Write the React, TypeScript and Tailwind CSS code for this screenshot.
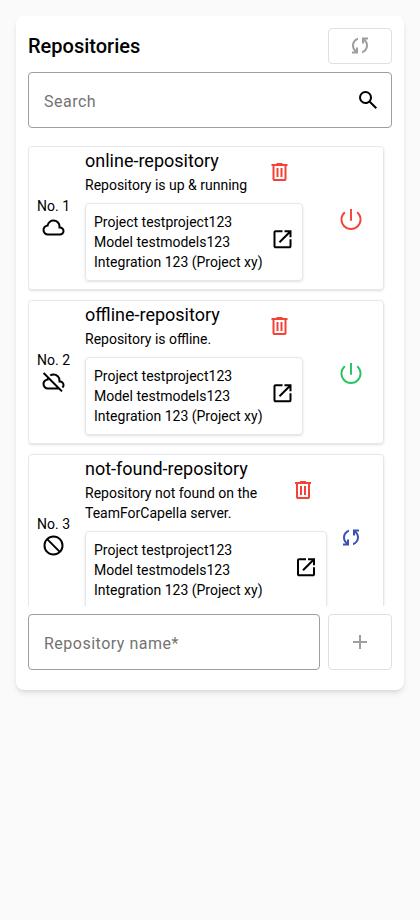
import React from "react";

const paths = {
  sync: "M160-160v-80h110l-16-14q-52-46-73-105t-21-119q0-111 66.5-197.5T400-790v84q-72 26-116 88.5T240-478q0 45 17 87.5t53 78.5l10 10v-98h80v240H160Zm400-10v-84q72-26 116-88.5T720-482q0-45-17-87.5T650-648l-10-10v98h-80v-240h240v80H690l16 14q49 49 71.5 106.5T800-482q0 111-66.5 197.5T560-170Z",
  search: "M784-120 532-372q-30 24-69 38t-83 14q-109 0-184.5-75.5T120-580q0-109 75.5-184.5T380-840q109 0 184.5 75.5T640-580q0 44-14 83t-38 69l252 252-56 56ZM380-400q75 0 127.5-52.5T560-580q0-75-52.5-127.5T380-760q-75 0-127.5 52.5T200-580q0 75 52.5 127.5T380-400Z",
  cloud: "M260-160q-91 0-155.5-63T40-377q0-78 47-139t123-78q25-92 100-149t170-57q117 0 198.5 81.5T760-520q69 8 114.5 59.5T920-340q0 75-52.5 127.5T740-160H260Zm0-80h480q42 0 71-29t29-71q0-42-29-71t-71-29h-60v-80q0-83-58.5-141.5T480-720q-83 0-141.5 58.5T280-520h-20q-58 0-99 41t-41 99q0 58 41 99t99 41Z",
  cloudOff: "M792-56 686-160H260q-92 0-156-64T40-380q0-77 47.5-137T210-594q3-8 6-15.5t6-16.5L56-792l56-56 736 736-56 56ZM260-240h346L284-562q-2 11-3 21t-1 21h-20q-58 0-99 41t-41 99q0 58 41 99t99 41Zm604 30-58-56q17-14 25.5-32.5T840-340q0-42-29-71t-71-29h-60v-80q0-83-58.5-141.5T480-720q-27 0-52 6.5T380-693l-58-58q35-24 74.5-36.5T480-800q117 0 198.5 81.5T760-520q69 8 114.5 59.5T920-340q0 39-15 72.5T864-210Z",
  block: "M480-80q-83 0-156-31.5T197-197q-54-54-85.5-127T80-480q0-83 31.5-156T197-763q54-54 127-85.5T480-880q83 0 156 31.5T763-763q54 54 85.5 127T880-480q0 83-31.5 156T763-197q-54 54-127 85.5T480-80Zm0-80q54 0 104-17.5t92-50.5L228-676q-33 42-50.5 92T160-480q0 134 93 227t227 93Zm252-124q33-42 50.5-92T800-480q0-134-93-227t-227-93q-54 0-104 17.5T284-732l448 448Z",
  trash: "M280-120q-33 0-56.5-23.5T200-200v-520h-40v-80h200v-40h240v40h200v80h-40v520q0 33-23.5 56.5T680-120H280Zm400-600H280v520h400v-520ZM360-280h80v-360h-80v360Zm160 0h80v-360h-80v360Z",
  open: "M200-120q-33 0-56.5-23.5T120-200v-560q0-33 23.5-56.5T200-840h280v80H200v560h560v-280h80v280q0 33-23.5 56.5T760-120H200Zm188-212-56-56 372-372H560v-80h280v280h-80v-144L388-332Z",
  power: "M447-438v-402h66v402h-66Zm33 318q-74 0-139.5-28.5T226-226q-49-49-77.500-114.500T120-480q0-80 33-151t93-123l47 47q-51 44-79 103t-28 124q0 122 86 208t208 86q122 0 208-86t86-208q0-65-27.500-124.500T667-707l47-47q60 52 93 123t33 151q0 74-28.500 139.500T734-226q-49 49-114.500 77.500T480-120Z",
  add: "M440-440H200v-80h240v-240h80v240h240v80H520v240h-80v-240Z",
};

type IconName = keyof typeof paths;

// dx and dy nudge the glyph inside its box, in viewBox units (40 units = 1px at size-6).
function Icon({ name, className = "size-6", dx = 0, dy = 0 }: { name: IconName; className?: string; dx?: number; dy?: number }) {
  return (
    <svg viewBox={`${-dx} ${-960 - dy} 960 960`} fill="currentColor" className={`block shrink-0 ${className}`}>
      <path d={paths[name]} />
    </svg>
  );
}

type Repository = {
  name: string;
  status: string;
  statusIcon: IconName;
  action: IconName;
  actionClass: string;
};

const repositories: Repository[] = [
  { name: "online-repository", status: "Repository is up & running", statusIcon: "cloud", action: "power", actionClass: "size-7 text-[#f44336]" },
  { name: "offline-repository", status: "Repository is offline.", statusIcon: "cloudOff", action: "power", actionClass: "size-7 text-[#22c55e]" },
  { name: "not-found-repository", status: "Repository not found on the TeamForCapella server.", statusIcon: "block", action: "sync", actionClass: "size-6 text-[#3f51b5]" },
];

function RepositoryCard({ repository, index }: { repository: Repository; index: number }) {
  const missing = repository.action === "sync";
  const dx = missing ? 0 : 20;
  return (
    <div className="flex w-[356px] shrink-0 items-center rounded border border-gray-200 shadow-sm">
      <div className="flex w-12 shrink-0 flex-col items-center pl-px">
        <span>No. {index + 1}</span>
        <Icon name={repository.statusIcon} className="-mt-px mb-px size-6" dx={-20} dy={20} />
      </div>
      <div className={`ml-2 flex flex-col pb-2 ${missing ? "w-[242px]" : "w-[218px]"}`}>
        <div className="flex items-center justify-between">
          <div className={missing ? "w-[185px]" : ""}>
            <div className="text-lg leading-7">{repository.name}</div>
            <div className={missing ? "" : "whitespace-nowrap"}>{repository.status}</div>
          </div>
          <button className="mr-3 pt-0.5 text-[#f44336]" aria-label="Delete">
            <Icon name="trash" dx={dx} />
          </button>
        </div>
        <div className="mt-2 flex items-center justify-between rounded border border-gray-200 p-2 shadow-sm">
          <div>
            <div>Project testproject123</div>
            <div>Model testmodels123</div>
            <div>Integration 123 (Project xy)</div>
          </div>
          <Icon name="open" className="mb-1.5 size-6" dx={dx} dy={10} />
        </div>
      </div>
      <div className="flex flex-1 justify-end pr-5">
        <button className="flex w-6 justify-center pt-0.5" aria-label="Change state">
          <Icon name={repository.action} className={repository.actionClass} dy={18} />
        </button>
      </div>
    </div>
  );
}

export default function App() {
  return (
    <div className="min-h-screen bg-[#fafafa] p-4 font-[Roboto,sans-serif] text-sm leading-5 text-black">
      <div className="flex h-[674px] w-[388px] flex-col rounded-lg bg-white p-3 shadow-md">
        <div className="flex items-center justify-between">
          <h2 className="text-xl font-medium">Repositories</h2>
          <button className="flex h-9 w-16 items-center justify-center rounded border border-[#e0e0e0] text-[#9e9e9e]" aria-label="Refresh">
            <Icon name="sync" dy={-20} />
          </button>
        </div>
        <div className="mt-2 flex h-14 items-center justify-between rounded border border-[#9e9e9e] pr-[11px] pl-[15px]">
          <span className="pt-1 text-base tracking-[0.5px] text-[#737373]">Search</span>
          <Icon name="search" />
        </div>
        <div className="mt-[18px] flex h-[460px] flex-col gap-2.5 overflow-hidden">
          {repositories.map((repository, i) => (
            <RepositoryCard key={repository.name} repository={repository} index={i} />
          ))}
        </div>
        <div className="mt-2 flex gap-2">
          <div className="flex h-14 w-[292px] items-center rounded border border-[#9e9e9e] pl-[15px]">
            <span className="pt-1 text-base tracking-[0.5px] text-[#737373]">Repository name*</span>
          </div>
          <button className="flex h-14 w-16 items-center justify-center rounded border border-[#e0e0e0] text-[#9e9e9e]" aria-label="Add">
            <Icon name="add" />
          </button>
        </div>
      </div>
    </div>
  );
}
